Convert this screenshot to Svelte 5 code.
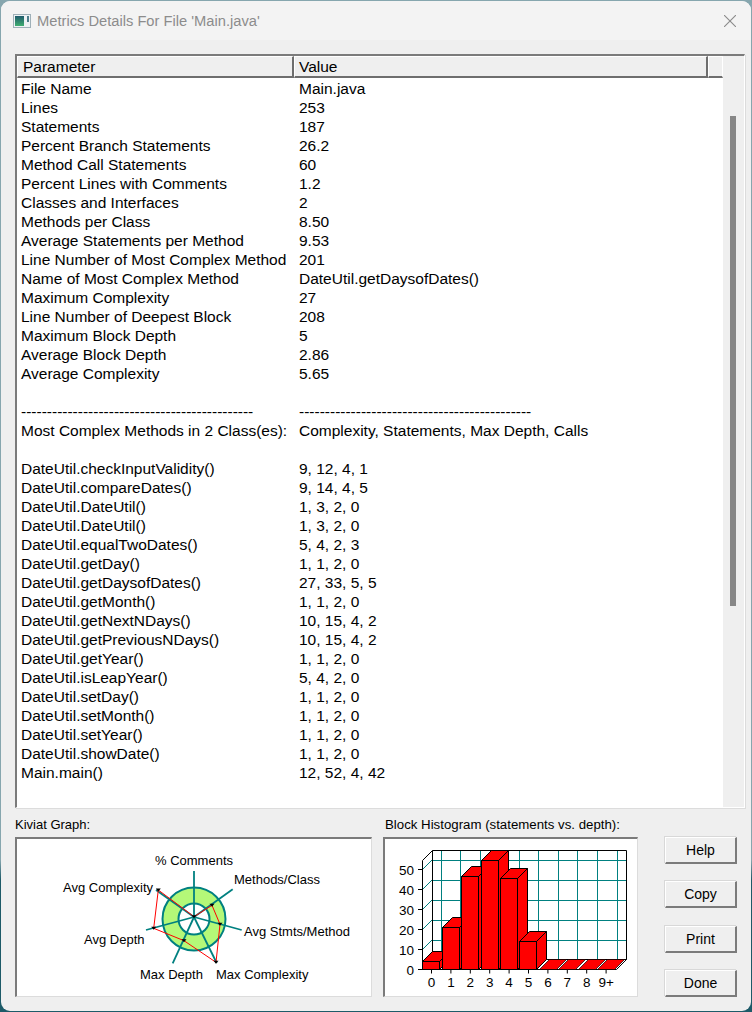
<script>
  const dashes = '-'.repeat(45);
  const top = [
    ['File Name','Main.java'],['Lines','253'],['Statements','187'],['Percent Branch Statements','26.2'],
    ['Method Call Statements','60'],['Percent Lines with Comments','1.2'],['Classes and Interfaces','2'],
    ['Methods per Class','8.50'],['Average Statements per Method','9.53'],['Line Number of Most Complex Method','201'],
    ['Name of Most Complex Method','DateUtil.getDaysofDates()'],['Maximum Complexity','27'],['Line Number of Deepest Block','208'],
    ['Maximum Block Depth','5'],['Average Block Depth','2.86'],['Average Complexity','5.65'],['\u00a0','\u00a0'],
    [dashes,dashes],
    ['Most Complex Methods in 2 Class(es):','Complexity, Statements, Max Depth, Calls'],['\u00a0','\u00a0'],
    ['DateUtil.checkInputValidity()','9, 12, 4, 1'],['DateUtil.compareDates()','9, 14, 4, 5'],['DateUtil.DateUtil()','1, 3, 2, 0'],
    ['DateUtil.DateUtil()','1, 3, 2, 0'],['DateUtil.equalTwoDates()','5, 4, 2, 3'],['DateUtil.getDay()','1, 1, 2, 0'],
    ['DateUtil.getDaysofDates()','27, 33, 5, 5'],['DateUtil.getMonth()','1, 1, 2, 0'],['DateUtil.getNextNDays()','10, 15, 4, 2'],
    ['DateUtil.getPreviousNDays()','10, 15, 4, 2'],['DateUtil.getYear()','1, 1, 2, 0'],['DateUtil.isLeapYear()','5, 4, 2, 0'],
    ['DateUtil.setDay()','1, 1, 2, 0'],['DateUtil.setMonth()','1, 1, 2, 0'],['DateUtil.setYear()','1, 1, 2, 0'],
    ['DateUtil.showDate()','1, 1, 2, 0'],['Main.main()','12, 52, 4, 42']
  ];
  const buttons = ['Help','Copy','Print','Done'];

  const spokes = [[194,871],[232.7,889.3],[241.7,930],[216.7,963],[172.7,963.3],[146,930],[156,890]];
  const redPts = [[194,916.7],[212,905.3],[220,924.3],[216,962.3],[184,940.7],[153.7,928.3],[158.3,890]];
  const kLabels = [
    ['% Comments',155,865],['Methods/Class',234,884],['Avg Stmts/Method',244,936],['Max Complexity',216,979],
    ['Max Depth',140,979],['Avg Depth',84,944],['Avg Complexity',63,892]
  ];

  const gridY = [860.5,880.5,900.5,920.5,940.5];
  const gridX = [441.5,460.5,480.5,500.5,519.5,538.5,558.5,577.5,597.5,617.5];
  const yTicks = [[969.5,'0'],[949.5,'10'],[929.5,'20'],[909.5,'30'],[889.5,'40'],[869.5,'50']];
  const xLabels = ['0','1','2','3','4','5','6','7','8','9+'];
  const bars = [
    [422.5,961.5],[442.5,927.5],[461.5,876.5],[481.5,860.5],[500.5,878.5],[519.5,941.5],
    [539.5,969.5],[558.5,969.5],[578.5,969.5],[597.5,969.5]
  ];
  const BW = 17, D = 10, FLOOR = 969.5;
</script>

<div class="window">
  <header class="titlebar">
    <svg class="appicon" width="18" height="14" viewBox="0 0 18 14">
      <defs>
        <linearGradient id="ig" x1="0" y1="0" x2="0" y2="1">
          <stop offset="0" stop-color="#1f5a6c"/>
          <stop offset="1" stop-color="#3fae70"/>
        </linearGradient>
      </defs>
      <rect x="0.5" y="0.5" width="17" height="13" fill="#eef2f4" stroke="#9fb0b8"/>
      <rect x="2" y="2" width="9" height="10" fill="url(#ig)"/>
      <rect x="14" y="2" width="2" height="6" fill="#4e7e8c"/>
    </svg>
    <span class="title">Metrics Details For File 'Main.java'</span>
    <svg class="close" width="12" height="12" viewBox="0 0 12 12">
      <path d="M0 0 L12 12 M12 0 L0 12" stroke="#8a8a8a" stroke-width="1.1" fill="none"/>
    </svg>
  </header>

  <main class="body">
    <section class="list">
      <div class="listmain">
        <div class="head">
          <div class="hcell hc1">Parameter</div>
          <div class="hcell hc2">Value</div>
          <div class="hcell hc3"></div>
        </div>
        <div class="rows">
          {#each top as r}
            <div class="row"><span class="c1">{r[0]}</span><span class="c2">{r[1]}</span></div>
          {/each}
        </div>
      </div>
      <div class="scroll"><div class="thumb"></div></div>
    </section>

    <section class="bottom">
      <div class="chartcol kiviat">
        <div class="cap">Kiviat Graph:</div>
        <div class="panel">
          <svg width="353" height="155" viewBox="17 839 353 155">
            <circle cx="194" cy="919" r="31.5" fill="#b4f878" stroke="#008080" stroke-width="2"/>
            <circle cx="194" cy="919" r="15.5" fill="#fff" stroke="#008080" stroke-width="2"/>
            {#each spokes as s}
              <line x1="194" y1="917" x2={s[0]} y2={s[1]} stroke="#008080" stroke-width="1.8"/>
            {/each}
            <polygon points={redPts.map(p=>p.join(',')).join(' ')} fill="none" stroke="#ff0000" stroke-width="1"/>
            {#each redPts as p}
              <path d="M{p[0]-2.5} {p[1]-1.5} h5 l-2.5 3 z" fill="#000"/>
            {/each}
            {#each kLabels as l}
              <text x={l[1]} y={l[2]} class="ktext">{l[0]}</text>
            {/each}
          </svg>
        </div>
      </div>

      <div class="chartcol hist">
        <div class="cap">Block Histogram (statements vs. depth):</div>
        <div class="panel">
          <svg width="251" height="155" viewBox="385 839 251 155">
            {#each gridY as y}
              <line x1="432.5" y1={y} x2="626.5" y2={y} stroke="#008080"/>
              <line x1="422.5" y1={y+9} x2="432.5" y2={y-1} stroke="#008080"/>
            {/each}
            {#each gridX as x}
              <line x1={x} y1="850.5" x2={x} y2="959.5" stroke="#008080"/>
            {/each}
            <path d="M422.5 969.5 V860.5 L432.5 850.5 H626.5 V959.5 H432.5 V850.5" fill="none" stroke="#000"/>
            {#each yTicks as t}
              <line x1="418" y1={t[0]} x2="422.5" y2={t[0]} stroke="#000"/>
              <text x="414" y={t[0]+5} text-anchor="end" class="htext">{t[1]}</text>
            {/each}
            <path d="M422.5 969.5 L432.5 959.5 H626.5 L616.5 969.5 Z" fill="#fff" stroke="#000"/>
            {#each xLabels as l, i}
              <line x1={431.5+19.4*i} y1="969.5" x2={431.5+19.4*i} y2="973.5" stroke="#000"/>
              <text x={431.5+19.4*i} y="987" text-anchor="middle" class="htext">{l}</text>
            {/each}
            {#each bars as b}
              {#if b[1] < FLOOR}
                <g fill="#ff0000" stroke="#000">
                  <path d="M{b[0]} {b[1]} l{D} {-D} h{BW} l{-D} {D} z"/>
                  <path d="M{b[0]+BW} {b[1]} l{D} {-D} V{FLOOR-D} l{-D} {D} z"/>
                  <rect x={b[0]} y={b[1]} width={BW} height={FLOOR-b[1]}/>
                </g>
              {:else}
                <path d="M{b[0]} {FLOOR} l{D} {-D} h{BW} l{-D} {D} z" fill="#ff0000" stroke="#000" stroke-width="0.7"/>
              {/if}
            {/each}
          </svg>
        </div>
      </div>

      <div class="buttons">
        {#each buttons as b}
          <button type="button" class="btn">{b}</button>
        {/each}
      </div>
    </section>
  </main>
</div>

<style>
  :global(html), :global(body) { margin: 0; padding: 0; }
  :global(body) {
    height: 1012px;
    overflow: hidden;
    background: linear-gradient(180deg, #86a6ae 0, #86a6ae 860px, #1d5a68 880px, #1d5a68 1012px);
  }
  .window {
    box-sizing: border-box;
    width: 750px;
    height: 1010px;
    margin-left: 1px;
    position: relative;
    top: 1px;
    background: #efefef;
    border-radius: 9px;
    overflow: hidden;
    font-family: "Liberation Sans", Arial, sans-serif;
    color: #000;
    display: flex;
    flex-direction: column;
  }
  .titlebar {
    height: 39px;
    flex: none;
    background: #f3f3f3;
    display: flex;
    align-items: center;
    padding: 0 15px 0 12px;
    gap: 6px;
  }
  .title { font-size: 14.7px; color: #8c8c8c; flex: 1; }
  .body {
    flex: 1;
    display: flex;
    flex-direction: column;
    padding: 14px 6px 14px 14px;
  }
  .list {
    box-sizing: border-box;
    height: 754px;
    display: flex;
    border-top: 2px solid #7b7b7b;
    border-left: 2px solid #7b7b7b;
    border-right: 1px solid #fff;
    border-bottom: 1px solid #fff;
    box-shadow: 1px 1px 0 #dcdcdc;
  }
  .listmain { flex: 1; display: flex; flex-direction: column; min-width: 0; background: #fff; }
  .head { display: flex; height: 22px; flex: none; background: #efefef; font-size: 15.5px; }
  .hcell {
    box-sizing: border-box;
    border-top: 1px solid #fff;
    border-left: 1px solid #fff;
    border-right: 2px solid #6e6e6e;
    border-bottom: 2px solid #6e6e6e;
    padding-left: 5px;
    line-height: 19px;
  }
  .hc1 { width: 277px; }
  .hc2 { width: 414px; padding-left: 4px; }
  .hc3 { flex: 1; border-right: 1px solid #fff; }
  .rows { padding: 1px 0 0 4px; font-size: 15.5px; line-height: 19px; overflow: hidden; }
  .row { display: flex; height: 19px; white-space: nowrap; }
  .c1 { width: 278px; flex: none; }
  .scroll { width: 21px; flex: none; background: #efefef; position: relative; }
  .thumb { position: absolute; left: 7px; width: 6px; top: 60px; height: 490px; background: #878787; }

  .bottom { display: flex; margin-top: 9px; height: 180px; }
  .chartcol { display: flex; flex-direction: column; }
  .kiviat { width: 357px; margin-right: 11px; }
  .hist { width: 255px; margin-right: 27px; }
  .cap { font-size: 13px; line-height: 15px; height: 20px; box-sizing: border-box; }
  .hist .cap { padding-left: 2px; font-size: 13.25px; }
  .panel {
    box-sizing: border-box;
    height: 160px;
    background: #fff;
    border-top: 2px solid #7b7b7b;
    border-left: 2px solid #7b7b7b;
    border-right: 1px solid #dcdcdc;
    border-bottom: 1px solid #dcdcdc;
    overflow: hidden;
  }
  .panel svg { display: block; }
  .ktext { font-family: "Liberation Sans", Arial, sans-serif; font-size: 13px; fill: #000; }
  .htext { font-family: "Liberation Sans", Arial, sans-serif; font-size: 13.5px; fill: #000; }
  .buttons { width: 72px; display: flex; flex-direction: column; justify-content: space-between; padding-top: 20px; box-sizing: border-box; }
  .btn {
    box-sizing: border-box;
    height: 27px;
    width: 72px;
    padding: 0;
    margin: 0;
    font: 14px "Liberation Sans", Arial, sans-serif;
    color: #000;
    background: #efefef;
    border-top: 1px solid #fff;
    border-left: 1px solid #fff;
    border-right: 2px solid #7b7b7b;
    border-bottom: 2px solid #7b7b7b;
    border-radius: 0;
    box-shadow: -1px -1px 0 #d8d8d8;
  }
</style>
